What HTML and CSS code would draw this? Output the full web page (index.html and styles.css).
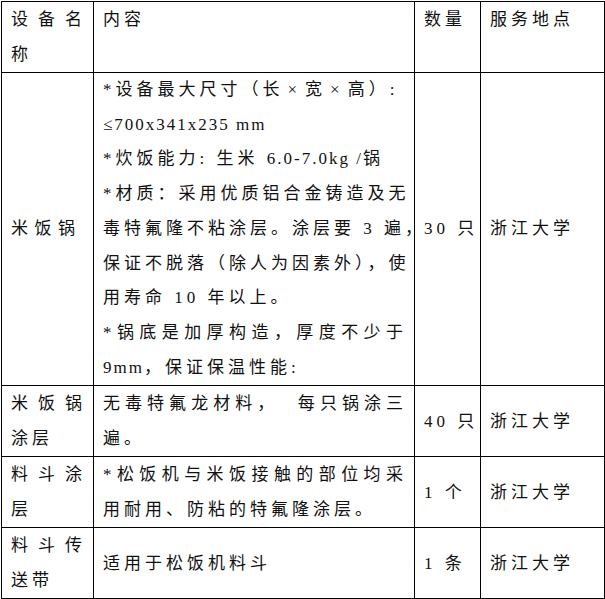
FILE: index.html
```html
<!DOCTYPE html>
<html lang="zh-CN">
<head>
<meta charset="utf-8">
<title>设备清单</title>
<link rel="stylesheet" href="styles.css">
</head>
<body>
<table class="spec">
  <colgroup>
    <col class="c-name">
    <col class="c-desc">
    <col class="c-qty">
    <col class="c-place">
  </colgroup>
  <tr class="head">
    <td><span class="ln full">设备名</span><span class="ln">称</span></td>
    <td><span class="ln">内容</span></td>
    <td><span class="ln">数量</span></td>
    <td><span class="ln">服务地点</span></td>
  </tr>
  <tr class="tall">
    <td><span class="ln wide">米饭锅</span></td>
    <td>
      <span class="ln">*设备最大尺寸（长<span class="x">×</span>宽<span class="x">×</span>高）:</span>
      <span class="ln"><span class="lat">≤700x341x235 mm</span></span>
      <span class="ln">*炊饭能力: 生米 <span class="lat">6.0-7.0kg /</span>锅</span>
      <span class="ln full">*材质：采用优质铝合金铸造及无</span>
      <span class="ln full">毒特氟隆不粘涂层。涂层要 3 遍，</span>
      <span class="ln full">保证不脱落（除人为因素外），使</span>
      <span class="ln">用寿命 10 年以上。</span>
      <span class="ln full">*锅底是加厚构造，厚度不少于</span>
      <span class="ln"><span class="lat">9mm</span>，保证保温性能:</span>
    </td>
    <td><span class="ln">30 只</span></td>
    <td><span class="ln">浙江大学</span></td>
  </tr>
  <tr>
    <td><span class="ln full">米饭锅</span><span class="ln">涂层</span></td>
    <td><span class="ln full">无毒特氟龙材料，&nbsp;&nbsp;每只锅涂三</span><span class="ln">遍。</span></td>
    <td><span class="ln">40 只</span></td>
    <td><span class="ln">浙江大学</span></td>
  </tr>
  <tr>
    <td><span class="ln full">料斗涂</span><span class="ln">层</span></td>
    <td><span class="ln full">*松饭机与米饭接触的部位均采</span><span class="ln">用耐用、防粘的特氟隆涂层。</span></td>
    <td><span class="ln">1 个</span></td>
    <td><span class="ln">浙江大学</span></td>
  </tr>
  <tr>
    <td><span class="ln full">料斗传</span><span class="ln">送带</span></td>
    <td><span class="ln">适用于松饭机料斗</span></td>
    <td><span class="ln">1 条</span></td>
    <td><span class="ln">浙江大学</span></td>
  </tr>
</table>
</body>
</html>
```

FILE: styles.css
```css
html, body {
  margin: 0;
  padding: 0;
  background: #ffffff;
}

body {
  padding: 1px 0 0 1px;
  font-family: "Liberation Serif", "Noto Sans CJK SC", serif;
  font-size: 17px;
  color: #111111;
}

.spec {
  border-collapse: collapse;
  table-layout: fixed;
  width: 603px;
}

.c-name { width: 92px; }
.c-desc { width: 321px; }
.c-qty { width: 66px; }
.c-place { width: 124px; }

.spec td {
  border: 1px solid #000000;
  padding: 0 7px 0 9px;
  vertical-align: middle;
  line-height: 35px;
  letter-spacing: 4px;
  text-align: left;
}

.spec tr.head td {
  vertical-align: top;
}

.spec tr.tall td {
  line-height: 34.7px;
}

.ln {
  display: block;
  white-space: nowrap;
}

.ln.full {
  text-align: justify;
  text-align-last: justify;
}

.ln.wide {
  letter-spacing: 6.5px;
}

.lat {
  letter-spacing: 2px;
}

.x {
  padding: 0 4px;
}
```
